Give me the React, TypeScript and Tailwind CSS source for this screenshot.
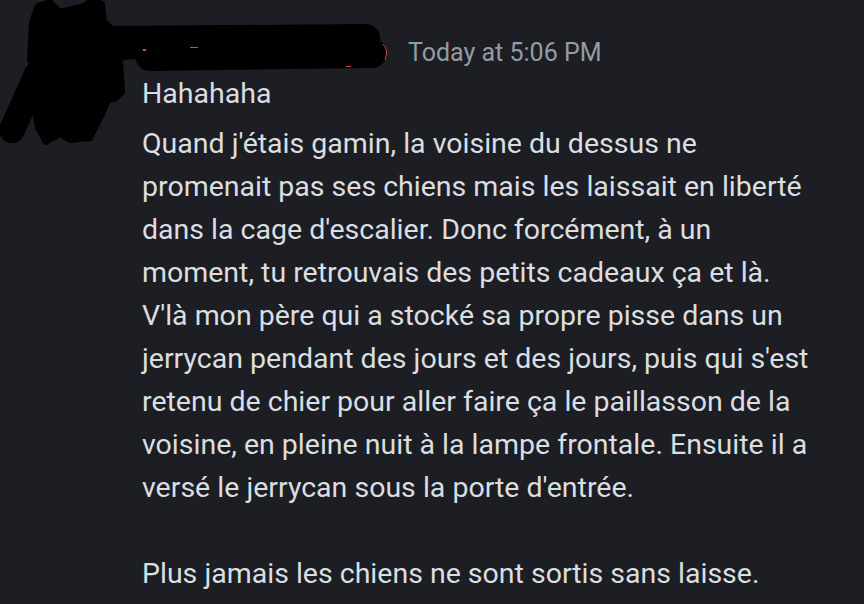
import React from "react";

const lines = [
  "Quand j'étais gamin, la voisine du dessus ne",
  "promenait pas ses chiens mais les laissait en liberté",
  "dans la cage d'escalier. Donc forcément, à un",
  "moment, tu retrouvais des petits cadeaux ça et là.",
  "V'là mon père qui a stocké sa propre pisse dans un",
  "jerrycan pendant des jours et des jours, puis qui s'est",
  "retenu de chier pour aller faire ça le paillasson de la",
  "voisine, en pleine nuit à la lampe frontale. Ensuite il a",
  "versé le jerrycan sous la porte d'entrée.",
  "",
  "Plus jamais les chiens ne sont sortis sans laisse.",
];

function Scribble() {
  return (
    <svg
      className="absolute left-0 top-0 pointer-events-none"
      width="420"
      height="160"
      viewBox="0 0 420 160"
    >
      <circle cx="66" cy="72" r="40" fill="#c48a5c" />
      <circle cx="66" cy="72" r="34" fill="#8a5a35" />
      <g fill="#000" stroke="#000" strokeLinecap="round" strokeLinejoin="round">
        <path d="M 112 40 L 366 38" strokeWidth="28" fill="none" />
        <path d="M 150 56 L 372 53" strokeWidth="30" fill="none" />
        <path d="M 112 57 L 170 52" strokeWidth="8" fill="none" />
        <path
          d="M 32 22 L 38 6 L 50 2 L 60 12 L 84 6 L 92 0 L 102 4 L 104 22 L 116 32 L 120 60 L 122 92 L 116 98 L 108 100 L 100 118 L 90 138 L 70 140 L 60 134 L 46 142 L 38 128 L 34 100 L 30 60 Z"
          strokeWidth="6"
        />
        <path d="M 12 130 L 38 72" strokeWidth="26" fill="none" />
        <path d="M 50 110 L 52 132" strokeWidth="18" fill="none" />
        <path d="M 72 118 L 72 132" strokeWidth="18" fill="none" />
        <path d="M 102 70 L 116 92" strokeWidth="14" fill="none" />
      </g>
      <rect x="143" y="49" width="3" height="2" fill="#d94a3a" />
      <rect x="190" y="47" width="8" height="1" fill="#d94a3a" />
      <rect x="346" y="66" width="5" height="1" fill="#d94a3a" />
      <path d="M 383 44 Q 389 50 385 60" stroke="#d94a3a" strokeWidth="1" fill="none" />
    </svg>
  );
}

export default function App() {
  return (
    <div
      className="relative w-[864px] h-[604px] overflow-hidden bg-[#1d1e23]"
      style={{ fontFamily: 'Roboto, "Liberation Sans", sans-serif' }}
    >
      <div className="pl-[142px] pt-[38px]">
        <div className="flex items-baseline h-[34px] leading-[30px]">
          <span className="w-[266px] text-[25px] text-[#d94a3a] whitespace-nowrap">
            username
          </span>
          <span className="text-[25px] text-[#949ba4] whitespace-nowrap">
            Today at 5:06 PM
          </span>
        </div>
        <div className="text-[28.5px] leading-[43px] text-[#dbdee1] whitespace-nowrap">
          Hahahaha
        </div>
        <div className="mt-[7px] text-[28.5px] leading-[43px] text-[#dbdee1]">
          {lines.map((l, i) => (
            <div key={i} className="whitespace-nowrap h-[43px]">
              {l}
            </div>
          ))}
        </div>
      </div>
      <Scribble />
    </div>
  );
}
